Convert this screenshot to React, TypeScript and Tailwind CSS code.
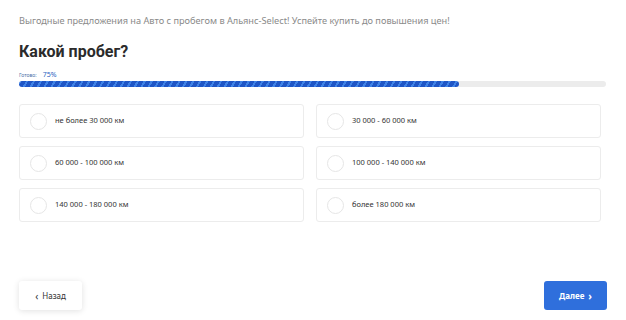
import React from 'react';

const options = [
  'не более 30 000 км',
  '30 000 - 60 000 км',
  '60 000 - 100 000 км',
  '100 000 - 140 000 км',
  '140 000 - 180 000 км',
  'более 180 000 км',
];

const App: React.FC = () => (
  <div className="w-[626px] h-[320px] bg-white font-['Noto_Sans',sans-serif] flex flex-col px-[19px]">
    {/* Header */}
    <p className="mt-[14px] text-[9.2px] leading-[14px] text-[#8a8a8a]">
      Выгодные предложения на Авто с пробегом в Альянс-Select! Успейте купить до повышения цен!
    </p>
    <h1 className="mt-[13px] font-['Roboto',sans-serif] text-[16px] leading-[22px] font-bold text-[#2b2b2b]">Какой пробег?</h1>

    {/* Progress */}
    <div className="mt-[8px] flex items-end gap-[6px] leading-none">
      <span className="text-[5px] text-[#4a6fa8]">Готово:</span>
      <span className="text-[7px] text-[#2a5fbf]">75%</span>
    </div>
    <div className="mt-[3px] mr-[1px] h-[6px] rounded-full bg-[#ececec]">
      <div className="h-full w-[75%] rounded-full bg-[repeating-linear-gradient(-60deg,#1f56c6_0px,#1f56c6_4px,#3f82e6_4px,#3f82e6_6px)]" />
    </div>

    {/* Options */}
    <div className="mt-[17px] grid grid-cols-2 gap-x-[12px] gap-y-[8px] w-[582px]">
      {options.map((o) => (
        <div key={o} className="h-[34px] rounded-[3px] border border-[#ececec] flex items-center pl-[10px]">
          <span className="w-[17px] h-[17px] rounded-full border border-[#e6e6e6]" />
          <span className="ml-[8px] text-[7.5px] text-[#333]">{o}</span>
        </div>
      ))}
    </div>

    {/* Footer */}
    <div className="mt-auto mb-[10px] flex justify-between">
      <button className="w-[63px] h-[29px] rounded-[3px] bg-white shadow-[0_1px_6px_rgba(0,0,0,0.12)] flex items-center justify-center gap-[4px] text-[8px] text-[#333]">
        <span className="text-[10px] leading-none">‹</span>Назад
      </button>
      <button className="w-[63px] h-[29px] rounded-[3px] bg-[#2f6fdc] flex items-center justify-center gap-[4px] text-[8px] font-bold text-white">
        Далее<span className="text-[10px] leading-none">›</span>
      </button>
    </div>
  </div>
);

export default App;
